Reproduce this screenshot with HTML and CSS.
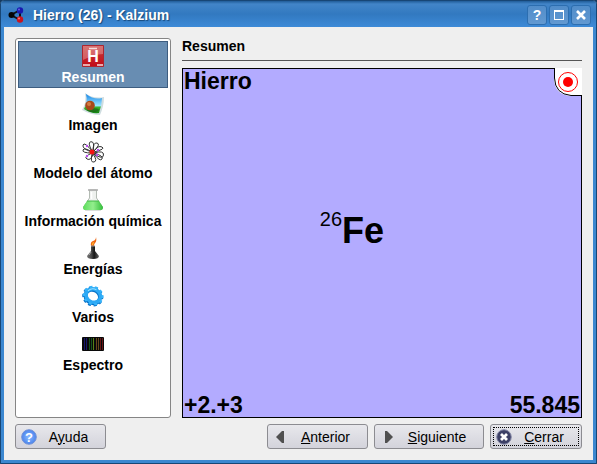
FILE: index.html
```html
<!DOCTYPE html>
<html lang="es">
<head>
<meta charset="utf-8">
<title>Hierro (26) - Kalzium</title>
<link rel="stylesheet" href="styles.css">
</head>
<body>
<div class="window">
  <header class="titlebar">
    <svg class="app-icon" viewBox="0 0 16 16" aria-hidden="true">
      <path d="M3 8 12 3M3 8l9 5M12 3v10" stroke="#111" stroke-width="2"/>
      <circle cx="3.500" cy="8" r="3" fill="#050505"/><circle cx="12" cy="3.500" r="3.200" fill="#1818b0"/><circle cx="12" cy="12.500" r="3.200" fill="#c91420"/>
      <circle cx="11" cy="2.500" r="1" fill="#6262e0"/><circle cx="11" cy="11.500" r="1" fill="#ff7474"/>
    </svg>
    <h1>Hierro (26) - Kalzium</h1>
    <div class="window-controls">
      <button type="button" aria-label="Ayuda contextual">?</button>
      <button type="button" aria-label="Maximizar">
        <svg viewBox="0 0 10 10" shape-rendering="crispEdges"><path d="M0 0h10v10H0zM1 2v7h8V2z" fill="#fff" fill-rule="evenodd"/></svg>
      </button>
      <button type="button" aria-label="Cerrar ventana">
        <svg viewBox="0 0 10 10"><path d="M1 1l8 8M9 1 1 9" stroke="#fff" stroke-width="2.600"/></svg>
      </button>
    </div>
  </header>
  <main class="content">
    <nav class="sidebar">
      <a class="item selected" href="#resumen" aria-current="page">
        <svg viewBox="0 0 22 22" aria-hidden="true">
          <defs><linearGradient id="red" x2="0" y2="1"><stop stop-color="#c9403e"/><stop offset="1" stop-color="#c10b18"/></linearGradient></defs>
          <path fill="url(#red)" stroke="#ad2630" d="M.5.5h21v21H.5z"/>
          <path d="M1 1h20v8Q12 9 1 15z" fill="#fff" opacity=".28"/>
          <path d="M7 3.500h8M1 20h7M15 20h6" stroke="#f5dede" stroke-width="1.500"/>
          <text x="11" y="17" text-anchor="middle" class="icon-letter">H</text>
        </svg>
        <span>Resumen</span>
      </a>
      <a class="item" href="#imagen">
        <svg viewBox="0 0 22 22" aria-hidden="true">
          <defs><linearGradient id="sky" x2="0" y2="1"><stop stop-color="#1685e8"/><stop offset=".6" stop-color="#9be4ff"/><stop offset=".7" stop-color="#37b52b"/><stop offset="1" stop-color="#158512"/></linearGradient></defs>
          <path d="M3 0Q11 6 22 4 22 13 18 22 9 22 0 17 5 9 3 0z" fill="#cfdde0"/>
          <path d="M4 1Q12 7 20 5 20 12 17 20 9 21 2 16 6 9 4 1z" fill="url(#sky)"/>
          <ellipse cx="11" cy="17" rx="6" ry="2" fill="#164c12" opacity=".5"/>
          <circle cx="8" cy="12.500" r="4.800" fill="#a8481a"/><circle cx="7" cy="11" r="2" fill="#d57b40"/>
        </svg>
        <span>Imagen</span>
      </a>
      <a class="item" href="#modelo">
        <svg viewBox="0 0 22 22" aria-hidden="true">
          <g fill="#fff" stroke="#333" stroke-width="1">
            <path d="M10 10Q5 1 9 .7T11 10M11 10Q11 1 15 2T12 10M10 11Q0 8 1 4T11 11M12 10Q16 4 20 6T12 11M10 12Q0 12 1 9T10 11M12 12Q22 9 21.500 14T12 13M10 12Q1 16 5 18T11 13M10 13Q8 22 12 21T11 13M12 13Q18 21 20 18T12 12"/>
          </g>
          <circle cx="10" cy="11" r="2.500" fill="#f51212"/>
          <g fill="#b84af0"><circle cx="5" cy="5" r="1.200"/><circle cx="16" cy="9" r="1.200"/><circle cx="5" cy="15" r="1.200"/><circle cx="15" cy="14" r="1.200"/></g>
        </svg>
        <span>Modelo del átomo</span>
      </a>
      <a class="item" href="#quimica">
        <svg viewBox="0 0 22 22" aria-hidden="true">
          <defs><linearGradient id="liquid" x2="1"><stop stop-color="#5ddc5c"/><stop offset=".5" stop-color="#93ee8d"/><stop offset="1" stop-color="#35bf3b"/></linearGradient></defs>
          <path d="M7.500 1v8L1.500 18q0 3 2 3h15q2 0 2-3L14.500 9V1z" fill="#eef1ee" stroke="#b3bbb3"/>
          <path d="M5 12h12l4 6q0 3-2 3H3q-2 0-2-3z" fill="url(#liquid)"/>
          <path d="M5 12h12" stroke="#40b945"/><path d="M6 1h10" stroke="#aaa" stroke-width="1.500"/>
          <path d="M9.500 3v7" fill="none" stroke="#fff" stroke-width="1.500"/>
        </svg>
        <span>Información química</span>
      </a>
      <a class="item" href="#energias">
        <svg viewBox="0 0 22 22" aria-hidden="true">
          <defs><linearGradient id="glass" x2="1"><stop stop-color="#777"/><stop offset=".4" stop-color="#444"/><stop offset=".6" stop-color="#171717"/><stop offset="1" stop-color="#666"/></linearGradient></defs>
          <path d="M9 9Q8 5 11 4q3-1 3-4 1 4-1 6-1 1-1 3z" fill="#ef6511"/><path d="M10 8q0-3 2-3l-1 3z" fill="#ffbd31"/>
          <path d="M9 9h4v5l4 5q0 3-6 3t-6-3l4-5z" fill="url(#glass)"/><path d="M9 9h4" stroke="#999"/><path d="M7 18l2-3" stroke="#aaa"/>
        </svg>
        <span>Energías</span>
      </a>
      <a class="item" href="#varios">
        <svg viewBox="0 0 22 22" aria-hidden="true">
          <g transform="rotate(30 11 11)" fill="none">
            <ellipse cx="11" cy="11.500" rx="7.500" ry="6.500" stroke="#0873c8" stroke-width="4"/>
            <ellipse cx="11" cy="11.500" rx="9.500" ry="8.500" stroke="#0873c8" stroke-width="2.500" stroke-dasharray="3 2.650"/>
            <ellipse cx="11" cy="10.500" rx="7.500" ry="6.500" stroke="#2ca9f5" stroke-width="3.500"/>
            <ellipse cx="11" cy="10.500" rx="9.500" ry="8.500" stroke="#36b4fa" stroke-width="2" stroke-dasharray="3 2.650"/>
            <path d="M4 9q2-5 7-5" stroke="#9be2ff"/>
          </g>
        </svg>
        <span>Varios</span>
      </a>
      <a class="item" href="#espectro">
        <svg viewBox="0 0 22 22" aria-hidden="true">
          <rect y="4" width="22" height="14" rx="1" fill="#090909"/>
          <path d="M2.500 5v12M4.500 5v12" stroke="#16166d"/><path d="M7.500 5v12M9.500 5v12" stroke="#14501c"/><path d="M11.500 5v12" stroke="#568114"/><path d="M14.500 5v12M16.500 5v12" stroke="#67451a"/><path d="M18.500 5v12M20.500 5v12" stroke="#681414"/>
        </svg>
        <span>Espectro</span>
      </a>
    </nav>
    <section class="page" id="resumen">
      <h2>Resumen</h2>
      <div class="element">
        <div class="name">Hierro</div>
        <div class="symbol"><span class="number">26</span><span>Fe</span></div>
        <div class="facts"><span>+2.+3</span><span>55.845</span></div>
        <svg class="state" viewBox="0 0 28 28" role="img" aria-label="Sólido">
          <path d="M0 0h28v28H16Q0 26 0 10z" fill="#fff"/>
          <path d="M.5 0v10Q1 26 17 27.500h11" fill="none" stroke="#000"/>
          <circle cx="14" cy="14" r="9.500" fill="none" stroke="#f00"/><circle cx="14" cy="14" r="5" fill="#f00"/>
        </svg>
      </div>
    </section>
  </main>
  <footer class="actions">
    <button type="button" class="button help">
      <svg viewBox="0 0 16 16" aria-hidden="true"><defs><radialGradient id="blue"><stop stop-color="#8bbcff"/><stop offset="1" stop-color="#4a83ed"/></radialGradient></defs><circle cx="8" cy="8" r="7.300" fill="url(#blue)" stroke="#7192d7"/><text x="8" y="13" text-anchor="middle" class="help-mark">?</text></svg>
      <span>A<u>y</u>uda</span>
    </button>
    <button type="button" class="button previous">
      <svg viewBox="0 0 16 16" aria-hidden="true"><path d="M11 2v12H9L3 8l6-6z" fill="#505050"/></svg>
      <span><u>A</u>nterior</span>
    </button>
    <button type="button" class="button next">
      <svg viewBox="0 0 16 16" aria-hidden="true"><path d="M5 2v12h2l6-6-6-6z" fill="#505050"/></svg>
      <span><u>S</u>iguiente</span>
    </button>
    <button type="button" class="button close">
      <svg viewBox="0 0 16 16" aria-hidden="true"><circle cx="8" cy="8" r="7.300" fill="#3d4066" stroke="#8c8fac"/><path d="M5 5l6 6M11 5l-6 6" stroke="#fff" stroke-width="2.800"/></svg>
      <span><u>C</u>errar</span>
    </button>
  </footer>
</div>
</body>
</html>
```
FILE: styles.css
```css
* { box-sizing: border-box; }
body {
  margin: 0;
  background: #15395f;
  color: #000;
  font-family: "Liberation Sans", Arial, sans-serif;
  font-size: 14px;
}
button { font: inherit; color: inherit; }
.window {
  display: flex;
  flex-direction: column;
  min-height: 100vh;
  border: 1px solid #174675;
  border-radius: 4px 4px 0 0;
  background: #efefef;
  box-shadow: inset 0 0 0 3px #3b87d0;
}
.titlebar {
  display: flex;
  align-items: center;
  height: 26px;
  padding: 1px 5px 0 7px;
  border-radius: 3px 3px 0 0;
  background: linear-gradient(#205c98, #4285c8 3px, #3279c0 50%, #3d8ad7);
  color: #fff;
}
.app-icon { width: 16px; height: 16px; }
h1 {
  flex: 1;
  margin: 0 0 0 9px;
  font-size: 14px;
  line-height: 18px;
  text-shadow: 1px 1px 1px #17487a;
}
.window-controls { display: flex; gap: 2px; }
.window-controls button {
  display: grid;
  place-items: center;
  width: 20px;
  height: 20px;
  padding: 0;
  border: 1px solid #2c6eb0;
  border-radius: 3px;
  background: linear-gradient(#518dca, #6299d1);
  font-weight: 700;
  line-height: 16px;
}
.window-controls svg { width: 10px; height: 10px; }
.content {
  display: flex;
  flex: 1;
  gap: 11px;
  padding: 11px 14px 0;
}
.sidebar {
  display: flex;
  flex: none;
  flex-direction: column;
  gap: 1px;
  width: 156px;
  padding: 2px;
  border: 1px solid #858585;
  border-radius: 3px;
  background: #fff;
}
.item {
  display: flex;
  flex-direction: column;
  align-items: center;
  height: 47px;
  padding-top: 3px;
  border: 1px solid transparent;
  color: #000;
  font-weight: 700;
  line-height: 20px;
  text-decoration: none;
  white-space: nowrap;
}
.item svg { flex: none; width: 22px; height: 22px; }
.selected {
  border-color: #3d5d80;
  background: #688db2;
  color: #fff;
}
.icon-letter { fill: #fff; font-size: 16px; font-weight: 700; }
.page {
  display: flex;
  flex: 1;
  flex-direction: column;
}
h2 {
  margin: 0 0 7px;
  padding-bottom: 6px;
  border-bottom: 1px solid #555;
  font-size: 14px;
  line-height: 16px;
}
.element {
  position: relative;
  display: flex;
  flex: 1;
  flex-direction: column;
  justify-content: space-between;
  border: 1px solid #000;
  background: #b3abff;
  font-weight: 700;
}
.name, .facts { padding: 0 1px; font-size: 23px; line-height: 24px; }
.facts { display: flex; justify-content: space-between; }
.symbol {
  display: flex;
  justify-content: center;
  align-items: flex-start;
  padding: 0 60px 24px 0;
  font-size: 36px;
  line-height: 44px;
}
.number { font-size: 20px; font-weight: 400; line-height: 20px; }
.state { position: absolute; top: -1px; right: -1px; width: 28px; height: 28px; }
.actions {
  display: flex;
  gap: 6px;
  padding: 6px 14px 14px;
}
.button {
  display: flex;
  align-items: center;
  height: 25px;
  padding: 0 5px;
  border: 1px solid #8c8c91;
  border-radius: 3px;
  background: linear-gradient(#e8e8ec, #d3d3db);
}
.button svg { flex: none; width: 16px; height: 16px; }
.button span { flex: 1; text-align: center; }
.help { width: 91px; margin-right: auto; }
.help-mark { fill: #fff; font-size: 13px; font-weight: 700; }
.previous { width: 101px; }
.next { width: 110px; }
.close {
  width: 92px;
  outline: 1px dotted #000;
  outline-offset: -4px;
}
```
